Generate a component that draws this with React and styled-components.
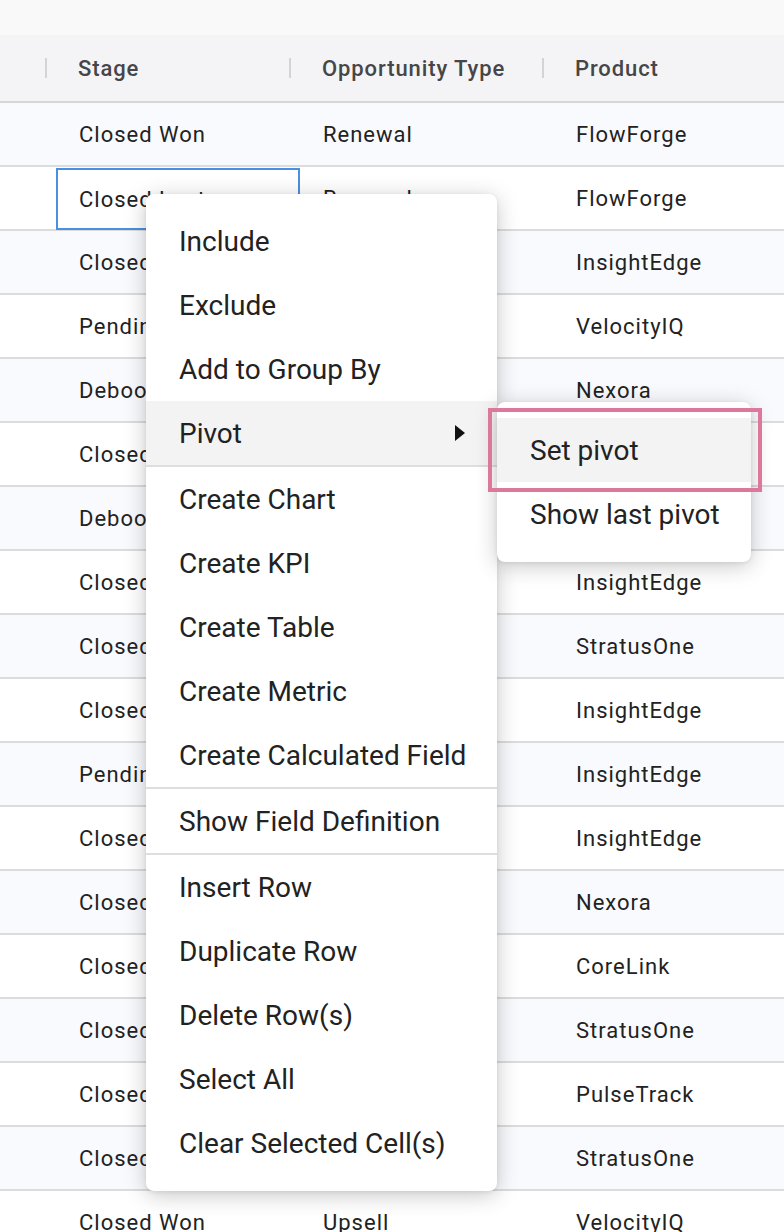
import React from "react";
import styled, { createGlobalStyle } from "styled-components";

const Global = createGlobalStyle`
  html, body {
    margin: 0;
    padding: 0;
    background: #ffffff;
    font-family: Roboto, "Liberation Sans", sans-serif;
  }
  * { box-sizing: border-box; }
`;

const COLS = "56px 244px 253px 1fr";

const rows = [
  ["Closed Won", "Renewal", "FlowForge"],
  ["Closed Lost", "Renewal", "FlowForge"],
  ["Closed Won", "New Business", "InsightEdge"],
  ["Pending", "Upsell", "VelocityIQ"],
  ["Debooked", "Renewal", "Nexora"],
  ["Closed Won", "Upsell", "CoreLink"],
  ["Debooked", "New Business", "PulseTrack"],
  ["Closed Lost", "Renewal", "InsightEdge"],
  ["Closed Won", "Upsell", "StratusOne"],
  ["Closed Won", "Renewal", "InsightEdge"],
  ["Pending", "New Business", "InsightEdge"],
  ["Closed Lost", "Upsell", "InsightEdge"],
  ["Closed Won", "Renewal", "Nexora"],
  ["Closed Won", "New Business", "CoreLink"],
  ["Closed Lost", "Upsell", "StratusOne"],
  ["Closed Won", "Renewal", "PulseTrack"],
  ["Closed Won", "Renewal", "StratusOne"],
  ["Closed Won", "Upsell", "VelocityIQ"],
];

const menuGroups = [
  ["Include", "Exclude", "Add to Group By", "Pivot"],
  ["Create Chart", "Create KPI", "Create Table", "Create Metric", "Create Calculated Field"],
  ["Show Field Definition"],
  ["Insert Row", "Duplicate Row", "Delete Row(s)", "Select All", "Clear Selected Cell(s)"],
];

const Page = styled.div`
  position: relative;
  width: 784px;
  height: 1232px;
  overflow: hidden;
`;

const TopBar = styled.div`
  height: 35px;
  background: #f9f9f9;
`;

const HeaderRow = styled.div`
  display: grid;
  grid-template-columns: ${COLS};
  height: 68px;
  background: #f4f4f6;
  border-bottom: 2px solid #d6d6d8;
`;

const HeaderCell = styled.div`
  position: relative;
  display: flex;
  align-items: center;
  padding-left: 22px;
  font-size: 22px;
  letter-spacing: 0.9px;
  font-weight: 500;
  color: #464648;

  &::after {
    content: "";
    display: ${(p) => (p.$last ? "none" : "block")};
    position: absolute;
    right: 9px;
    top: 23px;
    width: 2px;
    height: 20px;
    background: #d4d4d6;
  }
`;

const Row = styled.div`
  display: grid;
  grid-template-columns: ${COLS};
  height: 64px;
  background: ${(p) => (p.$odd ? "#f9fafd" : "#ffffff")};
  border-bottom: 2px solid #dcdcde;
`;

const Cell = styled.div`
  display: flex;
  align-items: center;
  padding-left: 21px;
  font-size: 22px;
  letter-spacing: 1px;
  color: #222222;
  white-space: nowrap;
  overflow: hidden;
  border: 2px solid ${(p) => (p.$selected ? "#4a8fe0" : "transparent")};
  margin-top: ${(p) => (p.$selected ? "1px" : "0")};
  margin-bottom: ${(p) => (p.$selected ? "-1px" : "0")};
`;

const Menu = styled.div`
  position: absolute;
  left: 146px;
  top: 194px;
  width: 351px;
  padding: 15px 0 16px;
  background: #ffffff;
  border-radius: 8px;
  box-shadow: 0 4px 22px rgba(0, 0, 0, 0.22), 0 1px 4px rgba(0, 0, 0, 0.08);
`;

const Group = styled.div`
  border-top: ${(p) => (p.$first ? "none" : "2px solid #dedede")};
`;

const Item = styled.div`
  display: flex;
  align-items: center;
  justify-content: space-between;
  height: 64px;
  padding: 0 32px 0 33px;
  font-size: 28px;
  color: #222222;
  background: ${(p) => (p.$active ? "#f3f3f3" : "transparent")};
  white-space: nowrap;
`;

const Caret = styled.span`
  width: 0;
  height: 0;
  border-top: 8px solid transparent;
  border-bottom: 8px solid transparent;
  border-left: 10px solid #111111;
`;

const SubMenu = styled.div`
  position: absolute;
  left: 497px;
  top: 402px;
  width: 254px;
  padding: 16px 0;
  background: #ffffff;
  border-radius: 8px;
  box-shadow: 0 4px 22px rgba(0, 0, 0, 0.22), 0 1px 4px rgba(0, 0, 0, 0.08);
`;

const Highlight = styled.div`
  position: absolute;
  left: 488px;
  top: 408px;
  width: 274px;
  height: 84px;
  border: 4px solid #dc789c;
`;

export default function App() {
  return (
    <Page>
      <Global />
      <TopBar />
      <HeaderRow>
        <HeaderCell />
        <HeaderCell>Stage</HeaderCell>
        <HeaderCell>Opportunity Type</HeaderCell>
        <HeaderCell $last>Product</HeaderCell>
      </HeaderRow>
      {rows.map((r, i) => (
        <Row key={i} $odd={i % 2 === 0}>
          <Cell />
          <Cell $selected={i === 1}>{r[0]}</Cell>
          <Cell>{r[1]}</Cell>
          <Cell>{r[2]}</Cell>
        </Row>
      ))}

      <Menu>
        {menuGroups.map((g, gi) => (
          <Group key={gi} $first={gi === 0}>
            {g.map((label) => (
              <Item key={label} $active={label === "Pivot"}>
                {label}
                {label === "Pivot" && <Caret />}
              </Item>
            ))}
          </Group>
        ))}
      </Menu>

      <SubMenu>
        <Item $active>Set pivot</Item>
        <Item>Show last pivot</Item>
      </SubMenu>
      <Highlight />
    </Page>
  );
}
